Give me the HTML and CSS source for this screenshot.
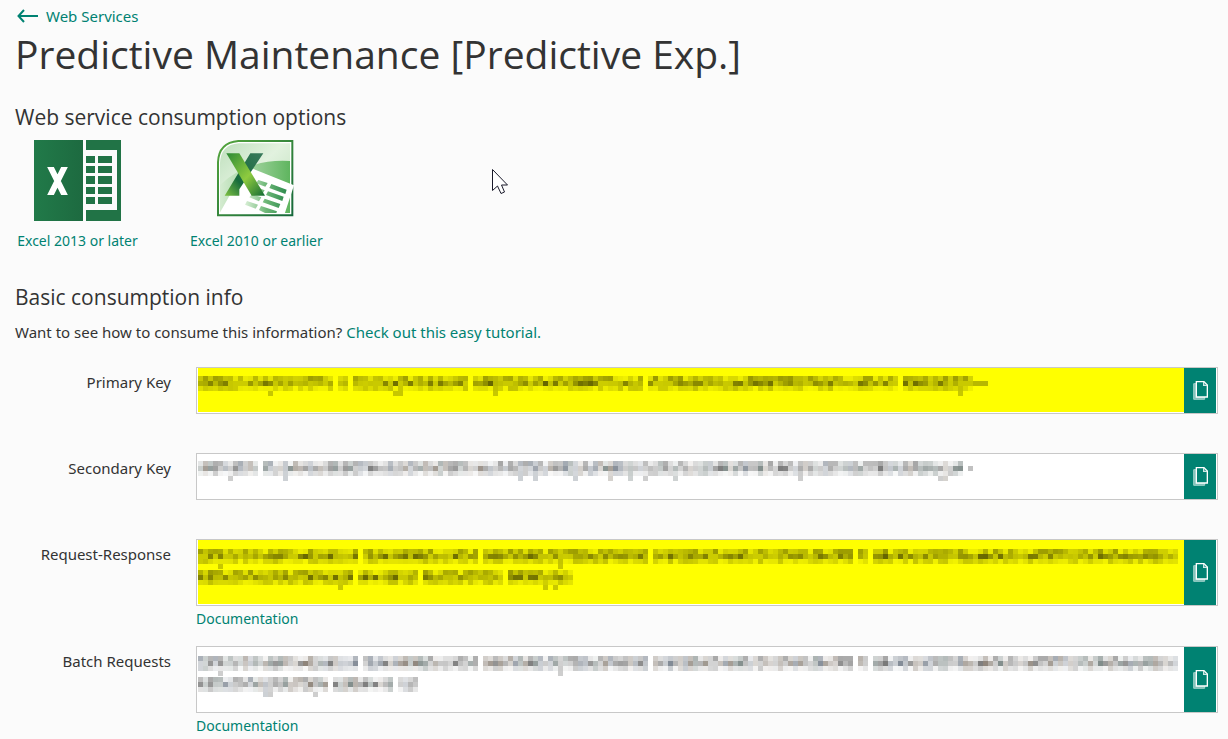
FILE: index.html
```
<!DOCTYPE html>
<html lang="en">
<head>
<meta charset="utf-8">
<title>Predictive Maintenance [Predictive Exp.]</title>
<link rel="stylesheet" href="styles.css">
</head>
<body>
<svg class="defs" aria-hidden="true">
  <symbol id="copy" viewBox="0 0 45 57">
    <path d="M9 8H2V55H35V48" fill="#7fc1b8" stroke="#9ed0c9" stroke-width="3"/>
    <path d="M10 2H33L43 12V48H10Z" fill="#008272" stroke="#fff" stroke-width="4"/>
    <path d="M32 3V13H42" fill="none" stroke="#d0e8e5" stroke-width="4"/>
  </symbol>
</svg>
<main class="page">
  <a class="back" href="#"><svg class="arrow" viewBox="0 0 21 14" aria-hidden="true"><path d="M7 1 1.500 7 7 13M2 7H21" fill="none" stroke="currentColor" stroke-width="2"/></svg><span>Web Services</span></a>
  <h1>Predictive Maintenance [Predictive Exp.]</h1>

  <h2>Web service consumption options</h2>
  <div class="options">
    <a class="option" href="#">
      <svg class="xl13" viewBox="0 0 87 81" aria-hidden="true">
        <defs>
          <linearGradient id="cover"><stop offset="0" stop-color="#217a49"/><stop offset="1" stop-color="#1d6a40"/></linearGradient>
          <clipPath id="xclip"><rect x="12" y="27" width="24" height="28"/></clipPath>
        </defs>
        <rect width="87" height="81" fill="#217346"/>
        <rect width="49" height="81" fill="url(#cover)"/>
        <rect x="49" width="3" height="81" fill="#fbfbfb"/>
        <rect x="51" y="10" width="32" height="60" fill="#fbfbfb"/>
        <path fill="#217346" d="M52 16h9v7h-9zM64 16h14v7h-14zM52 26h9v7h-9zM64 26h14v7h-14zM52 36h9v8h-9zM64 36h14v8h-14zM52 47h9v7h-9zM64 47h14v7h-14zM52 57h9v7h-9zM64 57h14v7h-14z"/>
        <g clip-path="url(#xclip)" stroke="#fff" stroke-width="6"><path d="M15 24 32 58M32 24 15 58"/></g>
      </svg>
      <span>Excel 2013 or later</span>
    </a>
    <a class="option" href="#">
      <svg class="xl10" viewBox="21 15 234 231" aria-hidden="true">
        <defs>
          <linearGradient id="edge" x1="0" y1="0" x2="1" y2="1"><stop offset="0" stop-color="#55a63d"/><stop offset="1" stop-color="#16683b"/></linearGradient>
          <linearGradient id="glass" x1="0" y1="0" x2="1" y2="1"><stop offset="0" stop-color="#bfe0bd"/><stop offset=".45" stop-color="#e2f2df"/><stop offset="1" stop-color="#b9deb8"/></linearGradient>
          <linearGradient id="wave" x1="0" y1="0" x2="1" y2="0"><stop offset="0" stop-color="#d4ebd0"/><stop offset="1" stop-color="#5fb55f"/></linearGradient>
          <linearGradient id="bar" x1="0" y1="0" x2="1" y2="1"><stop offset="0" stop-color="#2c8a35"/><stop offset=".55" stop-color="#8fcb3f"/><stop offset="1" stop-color="#126b35"/></linearGradient>
          <linearGradient id="bar2" x1="1" y1="0" x2="0" y2="1"><stop offset="0" stop-color="#3a7a5c"/><stop offset=".65" stop-color="#176b3c"/><stop offset="1" stop-color="#7fc241"/></linearGradient>
          <linearGradient id="cells"><stop offset="0" stop-color="#d9efd6"/><stop offset=".5" stop-color="#6fb878"/><stop offset="1" stop-color="#2e8b4e"/></linearGradient>
        </defs>
        <path d="M85 18H247V241H24V82Q26 23 85 18Z" fill="#fff" stroke="url(#edge)" stroke-width="6"/>
        <path d="M86 25H240V234H30V84Q32 30 86 25Z" fill="url(#glass)"/>
        <path d="M30 150Q115 70 240 78V234H30Z" fill="url(#wave)"/>
        <path d="M125 100 252 151 224 236H28L85 135Z" fill="#fff"/>
        <g fill="url(#cells)">
          <path d="M145 135 173 144 166 155 138 145ZM184 147 230 164 226 177 178 159ZM133 154 164 166 157 177 128 165ZM174 169 221 185 217 198 168 180ZM126 178 154 187 147 199 118 187ZM164 191 211 207 206 219 158 202ZM111 198 144 209 137 221 105 209ZM153 213 201 229 199 234 165 234 147 225Z"/>
        </g>
        <path d="M121 55H160L88 163V182H44Z" fill="url(#bar2)"/>
        <path d="M49 55H88L165 182H125Z" fill="url(#bar)"/>
      </svg>
      <span>Excel 2010 or earlier</span>
    </a>
  </div>

  <h2>Basic consumption info</h2>
  <p class="hint">Want to see how to consume this information? <a href="#">Check out this easy tutorial.</a></p>

  <form class="fields">
    <label for="primary">Primary Key</label>
    <div class="cell">
      <div class="field marked"><textarea id="primary" readonly></textarea><svg class="mosaic" data-key="primary" aria-hidden="true"></svg><button type="button" aria-label="Copy primary key"><svg class="copy"><use href="#copy"/></svg></button></div>
    </div>
    <label for="secondary">Secondary Key</label>
    <div class="cell">
      <div class="field"><textarea id="secondary" readonly></textarea><svg class="mosaic" data-key="secondary" aria-hidden="true"></svg><button type="button" aria-label="Copy secondary key"><svg class="copy"><use href="#copy"/></svg></button></div>
    </div>
    <label for="request">Request-Response</label>
    <div class="cell">
      <div class="field tall marked"><textarea id="request" readonly></textarea><svg class="mosaic" data-key="request" aria-hidden="true"></svg><button type="button" aria-label="Copy request-response address"><svg class="copy"><use href="#copy"/></svg></button></div>
      <a class="doc" href="#">Documentation</a>
    </div>
    <label for="batch">Batch Requests</label>
    <div class="cell">
      <div class="field tall"><textarea id="batch" readonly></textarea><svg class="mosaic" data-key="batch" aria-hidden="true"></svg><button type="button" aria-label="Copy batch requests address"><svg class="copy"><use href="#copy"/></svg></button></div>
      <a class="doc" href="#">Documentation</a>
    </div>
  </form>
  <svg class="pointer" viewBox="0 0 16 25" aria-hidden="true"><path d="M.5.500V21.500L5.500 17 9 24.500 12.500 23 9.500 16H15.500Z" fill="#fff" stroke="#1a1a2a"/></svg>
</main>
<script src="mosaic.js"></script>
</body>
</html>
```
FILE: styles.css
```
* { box-sizing: border-box; }

body {
  margin: 0;
  background: #fbfbfb;
  color: #333;
  font: 15px/20px "Noto Sans", "Open Sans", sans-serif;
}

a { color: #008272; text-decoration: none; }
.defs { position: absolute; width: 0; height: 0; }

.page { position: relative; padding: 6px 10px 0 15px; }

.back { display: flex; align-items: center; gap: 8px; padding-left: 2px; }
.arrow { width: 21px; height: 14px; }

h1, h2 { margin: 0; font-family: "Open Sans", "Noto Sans", sans-serif; font-weight: 400; }
h1 { font-size: 39px; line-height: 56px; }
h2 { font-size: 21px; line-height: 28px; }
h1 + h2 { margin-top: 21px; }

.options { display: flex; gap: 50px; margin: 9px 0 32px; }
.option { display: flex; flex-direction: column; align-items: center; justify-content: space-between; min-width: 125px; height: 111px; font-size: 14px; }
.xl13 { width: 87px; height: 81px; }
.xl10 { width: 78px; height: 77px; }

.hint { margin: 11px 0 25px; }

.fields { display: grid; grid-template-columns: 156px 1fr; column-gap: 25px; }
.fields label { text-align: right; padding-top: 5px; }
.cell { min-height: 86px; }

.field { position: relative; display: flex; height: 47px; padding-right: 1px; border: 1px solid #c8c8c8; background: #fff; }
.field.tall { height: 67px; }
.field textarea { flex: 1; min-width: 0; margin: 0 0 0 1px; padding: 0; border: 0; outline: 0; resize: none; background: transparent; }
.field.marked textarea { margin-bottom: 1px; background: #ff0; }
.field button { display: flex; align-items: center; justify-content: center; width: 32px; padding: 0; border: 0; background: #008272; }
.copy { width: 15px; height: 19px; }
.mosaic { position: absolute; top: 0; left: 1px; width: calc(100% - 34px); height: 100%; pointer-events: none; }

.doc { display: block; margin-top: 3px; font-size: 14px; }
.tall + .doc { margin-bottom: 17px; }

.pointer { position: absolute; left: 492px; top: 169px; width: 16px; height: 25px; }
```
FILE: mosaic.js
```
// Draws masked key values as lines of 5px blocks.
const CELL = 5;
const masks = {
  primary: [{ y: 8, n: 158, seed: 7, gaps: [27, 30, 54, 89, 140], low: [14, 39, 40, 59, 152], tail: 3 }],
  secondary: [{ y: 7, n: 155, seed: 19, gaps: [12, 153], low: [6, 17, 64, 67, 75, 82, 86, 89, 95, 120, 148, 149], tail: 2 }],
  request: [
    { y: 9, n: 196, seed: 31, gaps: [32, 56, 90, 131, 134], low: [4, 72], tail: 0 },
    { y: 30, n: 75, seed: 43, gaps: [31, 44, 61], low: [28, 69, 71], tail: 0 }
  ],
  batch: [
    { y: 9, n: 196, seed: 31, gaps: [32, 56, 90, 131, 134], low: [4, 72], tail: 0 },
    { y: 30, n: 44, seed: 43, gaps: [26, 39], low: [13, 14, 23], tail: 0 }
  ]
};

function random(seed) {
  let s = seed * 7919;
  return () => (s = (s * 16807) % 2147483647) / 2147483647;
}

document.querySelectorAll(".mosaic").forEach((svg) => {
  const marked = svg.parentElement.classList.contains("marked");
  const put = (col, y, h, alpha, tint) => {
    const r = document.createElementNS("http://www.w3.org/2000/svg", "rect");
    r.setAttribute("x", col * CELL);
    r.setAttribute("y", y);
    r.setAttribute("width", CELL);
    r.setAttribute("height", h);
    r.setAttribute("fill", marked ? "#000" : tint);
    r.setAttribute("fill-opacity", alpha.toFixed(2));
    svg.append(r);
  };
  const tints = ["#222", "#222", "#1c2c40", "#40301f", "#1f3330"];
  masks[svg.dataset.key].forEach((line) => {
    const rnd = random(line.seed);
    for (let i = 0; i < line.n; i++) {
      const a = rnd(), b = rnd(), c = rnd();
      const tint = tints[Math.floor(rnd() * tints.length)];
      if (line.gaps.includes(i)) continue;
      const end = i >= line.n - line.tail;
      if (!end) put(i, line.y, CELL, 0.06 + a * 0.34, tint);
      put(i, line.y + 5, CELL, end ? 0.28 : 0.2 + b * b * 0.4, tint);
      if (!end) put(i, line.y + 10, CELL, 0.04 + c * 0.2, tint);
      if (line.low.includes(i)) put(i, line.y + 15, CELL, 0.22, tint);
    }
  });
});
```
